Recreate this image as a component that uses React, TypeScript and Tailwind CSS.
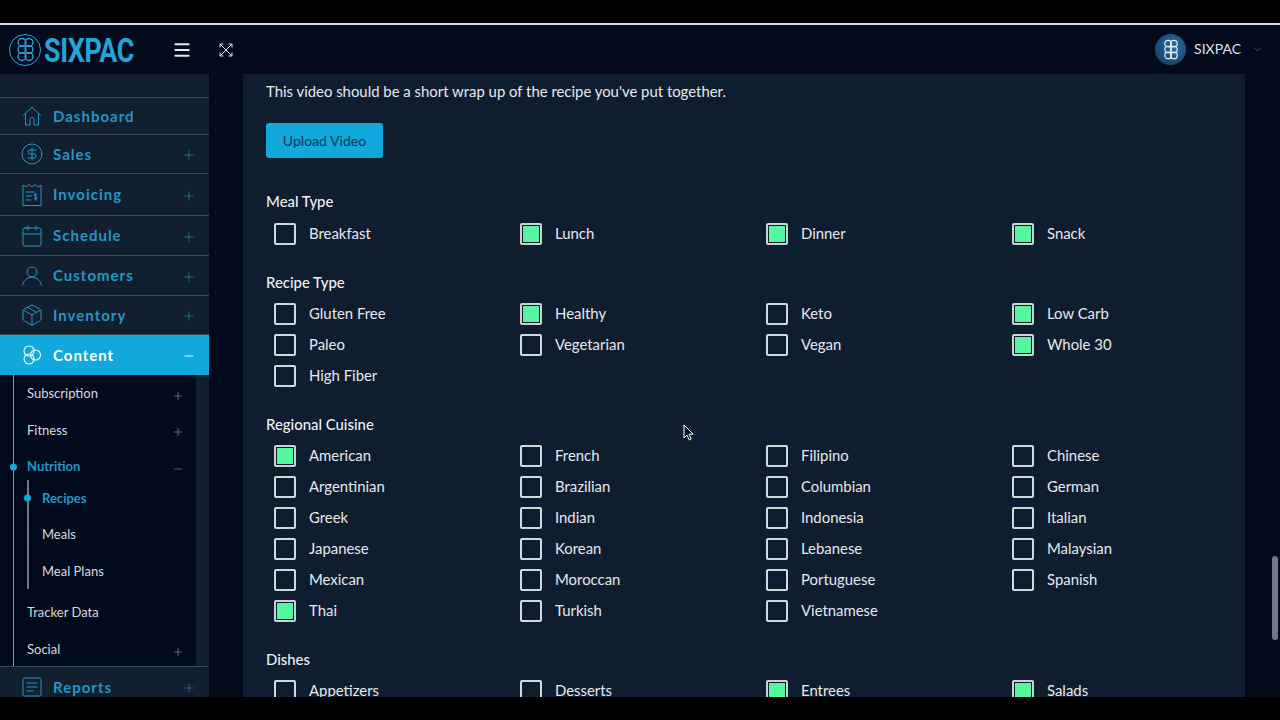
import { ChevronDown, CircleDollarSign, Menu, Minus, Package, Calendar, Plus } from "lucide-react";
import type { ReactNode } from "react";

const FONT = "font-['Lato','Noto_Sans',sans-serif]";

function SixLogo({ className }: { className?: string }) {
  return (
    <svg viewBox="0 0 24 32" fill="none" stroke="currentColor" strokeWidth="1.8" className={className}>
      <circle cx="7.5" cy="7" r="5" />
      <circle cx="16.5" cy="7" r="5" />
      <circle cx="7.5" cy="16" r="5" />
      <circle cx="16.5" cy="16" r="5" />
      <circle cx="7.5" cy="25" r="5" />
      <circle cx="16.5" cy="25" r="5" />
    </svg>
  );
}

function HomeIcon() {
  return (
    <svg viewBox="0 0 20 20" fill="none" stroke="currentColor" strokeWidth="1" className="h-[20px] w-[20px] shrink-0">
      <path d="M.7 10 10 1.200 19.300 10" />
      <path d="M3.500 7.500V19H8v-5.500a2 2 0 0 1 4 0V19h4.500V7.500" />
    </svg>
  );
}

function UserIcon() {
  return (
    <svg viewBox="0 0 20 20" fill="none" stroke="currentColor" strokeWidth="1" className="h-[20px] w-[20px] shrink-0">
      <circle cx="10" cy="6" r="5" />
      <path d="M.7 19.500c.6-5 4.300-8.200 9.300-8.200s8.700 3.200 9.300 8.200" />
    </svg>
  );
}

function ExpandIcon() {
  return (
    <svg viewBox="0 0 14 14" fill="none" stroke="currentColor" strokeWidth="1" className="ml-[27px] h-[14px] w-[14px] text-[#e4e6e8]">
      <path d="M1 1l12 12M13 1 1 13" />
      <path d="M1 4.500V1h3.500M9.500 1H13v3.500M1 9.500V13h3.500M13 9.500V13H9.500" />
    </svg>
  );
}

function InvoiceIcon() {
  return (
    <svg viewBox="0 0 20 24" fill="none" stroke="currentColor" strokeWidth="1" className="h-[24px] w-[20px] shrink-0">
      <path d="M1 22.5V2l3 2 3-2.5 3 2.5 3-2.5 3 2.5 3-2v20.500z" />
      <path d="M4 9h9M4 13h6M4 17h5" />
      <path d="M15 11.500c-1.500-1-3-.5-3 .8s3 1 3 2.500-1.800 1.700-3 .8M13.600 10v8" />
    </svg>
  );
}

function ContentIcon({ className }: { className?: string }) {
  return (
    <svg viewBox="0 0 20 20" fill="none" stroke="currentColor" strokeWidth="1.100" className={className}>
      <circle cx="7" cy="6" r="5" />
      <circle cx="13.500" cy="10" r="5" />
      <circle cx="7" cy="14" r="5" />
    </svg>
  );
}

function ReportsIcon() {
  return (
    <svg viewBox="0 0 20 20" fill="none" stroke="currentColor" strokeWidth="1" className="h-[20px] w-[20px] shrink-0">
      <rect x="1" y="1" width="18" height="18" rx="1.500" />
      <path d="M4.500 6h11M4.500 10h11M4.500 14h7" />
    </svg>
  );
}

function MainItem({
  icon,
  label,
  toggle,
  active,
  h,
  last,
}: {
  icon: ReactNode;
  label: string;
  toggle?: boolean;
  active?: boolean;
  h: string;
  last?: boolean;
}) {
  return (
    <div
      className={`flex shrink-0 items-center pl-[22px] pr-[13px] ${h} ${
        active ? "bg-[#11a9dc] text-white" : "text-[#2496c6]"
      } ${last || active ? "" : "border-b border-[#3a4a59]"}`}
    >
      <span className="flex w-[20px] justify-center">{icon}</span>
      <span className="ml-[11px] flex-1 text-[15px] font-bold tracking-[1px]">{label}</span>
      {toggle &&
        (active ? (
          <Minus size={14} strokeWidth={1.500} className="mt-[2px] text-white" />
        ) : (
          <Plus size={14} strokeWidth={1.200} className="mt-[2px] text-[#2a86b0]" />
        ))}
    </div>
  );
}

function SubItem({ label, h, toggle, open, active }: { label: string; h: string; toggle?: boolean; open?: boolean; active?: boolean }) {
  return (
    <div className={`relative flex items-center pl-[13px] pr-[12px] ${h}`}>
      {active && <span className="absolute left-[-4px] top-1/2 h-[7px] w-[7px] -translate-y-1/2 rounded-full bg-[#11a9dc]" />}
      <span className={`flex-1 text-[13px] ${active ? "font-bold text-[#2496c6]" : "text-[#d5d9de]"}`}>{label}</span>
      {toggle &&
        (open ? (
          <Minus size={12} className="mt-[4px] text-[#4f6070]" />
        ) : (
          <Plus size={12} className="mt-[4px] text-[#4f6f85]" />
        ))}
    </div>
  );
}

function LeafItem({ label, active }: { label: string; active?: boolean }) {
  return (
    <div className="relative flex h-[36.500px] items-center pl-[13px]">
      {active && <span className="absolute left-[-5px] top-1/2 h-[7px] w-[7px] -translate-y-1/2 rounded-full bg-[#11a9dc]" />}
      <span className={`text-[13px] ${active ? "font-bold text-[#2496c6]" : "text-[#d5d9de]"}`}>{label}</span>
    </div>
  );
}

function Sidebar() {
  return (
    <aside className="flex h-full w-[209px] shrink-0 flex-col overflow-hidden bg-[#111f2f]">
      <div className="h-[24px] shrink-0 border-b border-[#3a4a59]" />
      <MainItem h="h-[37px]" icon={<HomeIcon />} label="Dashboard" />
      <MainItem h="h-[39px]" icon={<CircleDollarSign size={24} strokeWidth={1} className="shrink-0" />} label="Sales" toggle />
      <MainItem h="h-[42px]" icon={<InvoiceIcon />} label="Invoicing" toggle />
      <MainItem h="h-[40px]" icon={<Calendar size={24} strokeWidth={1} className="shrink-0" />} label="Schedule" toggle />
      <MainItem h="h-[40px]" icon={<UserIcon />} label="Customers" toggle />
      <MainItem h="h-[39px]" icon={<Package size={24} strokeWidth={1} className="shrink-0" />} label="Inventory" toggle />
      <MainItem h="h-[40px]" icon={<ContentIcon className="h-[20px] w-[20px] shrink-0" />} label="Content" toggle active />
      <div className="h-[291px] w-[196px] shrink-0 bg-[#020b1c] pl-[13px]">
        <div className="h-full border-l border-[#8a929b] pt-[1px]">
          <SubItem h="h-[36px]" label="Subscription" toggle />
          <SubItem h="h-[36.500px]" label="Fitness" toggle />
          <SubItem h="h-[36.500px]" label="Nutrition" toggle open active />
          <div className="ml-[13px] -mt-[5px] mb-[5px] h-[109px] border-l-2 border-[#6f7882]">
            <LeafItem label="Recipes" active />
            <LeafItem label="Meals" />
            <LeafItem label="Meal Plans" />
          </div>
          <SubItem h="h-[38px]" label="Tracker Data" />
          <SubItem h="h-[36px]" label="Social" toggle />
        </div>
      </div>
      <div className="border-t border-[#3a4a59]">
        <MainItem h="h-[40px]" icon={<ReportsIcon />} label="Reports" toggle last />
      </div>
    </aside>
  );
}

function Check({ label, on }: { label: string; on?: boolean }) {
  return (
    <div className="flex h-[31px] items-center">
      <span className={`flex h-[22px] w-[22px] items-center justify-center rounded-[2px] border-2 ${on ? "border-[#c9d3d6] bg-[#0c1a28]" : "border-[#d4d8dc]"}`}>
        {on && <span className="h-[16px] w-[16px] bg-[#54f7a0]" />}
      </span>
      <span className="ml-[13px] text-[14.900px] text-[#e6e9ec]">{label}</span>
    </div>
  );
}

function Group({ title, items, className, gap = "mt-[4px]" }: { title: string; items: [string, boolean?][]; className: string; gap?: string }) {
  return (
    <section className={className}>
      <h3 className="flex h-[24px] items-center text-[14.900px] font-medium text-[#eef0f2]">{title}</h3>
      <div className={`${gap} grid grid-cols-[246px_246px_246px_246px] pl-[8px]`}>
        {items.map(([label, on]) => (
          <Check key={label} label={label} on={on} />
        ))}
      </div>
    </section>
  );
}

export default function App() {
  return (
    <div className={`flex h-screen w-full flex-col overflow-hidden bg-black ${FONT}`}>
      <div className="h-[23px] shrink-0" />
      <header className="flex h-[51px] shrink-0 items-center border-t-2 border-[#d5d8db] bg-[#020a1c] text-white">
        <div className="ml-[9px] flex h-[32px] w-[32px] items-center justify-center rounded-full border border-[#2ba6d3] text-[#2ba6d3]">
          <SixLogo className="h-[25px] w-[19px]" />
        </div>
        <span className="ml-[3px] w-[90px] font-['Roboto',sans-serif] text-[34px] font-bold leading-none tracking-[-0.5px] text-[#25a5d6] [transform:scaleX(0.79)] [transform-origin:left]">
          SIXPAC
        </span>
        <Menu size={20} strokeWidth={2.400} className="ml-[38px] text-[#e4e6e8]" />
        <ExpandIcon />
        <div className="ml-auto flex items-center">
          <div className="flex h-[31px] w-[31px] items-center justify-center rounded-full bg-[radial-gradient(circle_at_60%_40%,#2a6ea6,#123457)] text-[#e8eef3]">
            <SixLogo className="h-[21px] w-[16px]" />
          </div>
          <span className="ml-[8px] -mt-[2px] text-[14px] text-[#dfe3e6]">SIXPAC</span>
          <ChevronDown size={11} strokeWidth={1.200} className="ml-[11px] mr-[17px] text-[#8d97a0]" />
        </div>
      </header>
      <div className="flex h-[623px] shrink-0 bg-[#020b1c]">
        <Sidebar />
        <main className="ml-[34px] h-full w-[1002px] shrink-0 overflow-hidden bg-[#0f1e2e] pl-[23px] pt-[5px]">
          <p className="flex h-[24px] items-center text-[14.900px] text-[#e6e9ec]">
            This video should be a short wrap up of the recipe you've put together.
          </p>
          <button className="mt-[20px] h-[35px] w-[117px] rounded-[3px] bg-[#11a9dc] text-[14px] font-medium text-[#0b3f5e]">
            Upload Video
          </button>
          <Group
            className="mt-[31px]"
            gap="mt-[5px]"
            title="Meal Type"
            items={[["Breakfast"], ["Lunch", true], ["Dinner", true], ["Snack", true]]}
          />
          <Group
            className="mt-[21px]"
            title="Recipe Type"
            items={[
              ["Gluten Free"], ["Healthy", true], ["Keto"], ["Low Carb", true],
              ["Paleo"], ["Vegetarian"], ["Vegan"], ["Whole 30", true],
              ["High Fiber"],
            ]}
          />
          <Group
            className="mt-[21px]"
            title="Regional Cuisine"
            items={[
              ["American", true], ["French"], ["Filipino"], ["Chinese"],
              ["Argentinian"], ["Brazilian"], ["Columbian"], ["German"],
              ["Greek"], ["Indian"], ["Indonesia"], ["Italian"],
              ["Japanese"], ["Korean"], ["Lebanese"], ["Malaysian"],
              ["Mexican"], ["Moroccan"], ["Portuguese"], ["Spanish"],
              ["Thai", true], ["Turkish"], ["Vietnamese"],
            ]}
          />
          <Group
            className="mt-[21px]"
            title="Dishes"
            items={[["Appetizers"], ["Desserts"], ["Entrees", true], ["Salads", true]]}
          />
        </main>
        <div className="flex-1 pl-[27px] pt-[482px]">
          <div className="h-[84px] w-[6px] rounded-full bg-[#6f7a88]" />
        </div>
      </div>
      {/* mouse pointer from the recording */}
      <svg viewBox="0 0 12 18" className="absolute left-[683px] top-[424px] h-[18px] w-[12px]">
        <path d="M1 1v13l3-3 2.200 5 2-1-2.200-4.800h4.200z" fill="#111" stroke="#fff" strokeWidth="1" />
      </svg>
    </div>
  );
}
